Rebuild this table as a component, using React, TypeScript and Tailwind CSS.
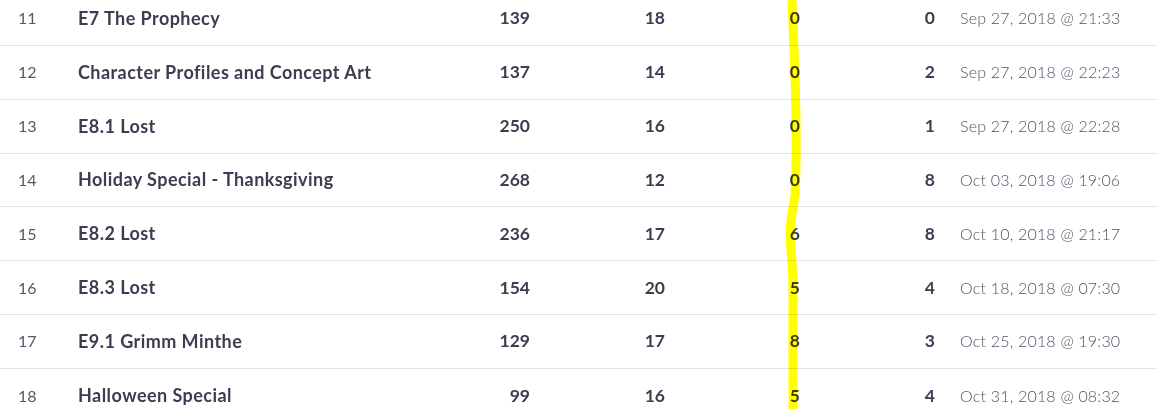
import React from "react";

type Row = {
  n: number;
  title: string;
  a: number;
  b: number;
  c: number;
  d: number;
  date: string;
};

const rows: Row[] = [
  { n: 11, title: "E7 The Prophecy", a: 139, b: 18, c: 0, d: 0, date: "Sep 27, 2018 @ 21:33" },
  { n: 12, title: "Character Profiles and Concept Art", a: 137, b: 14, c: 0, d: 2, date: "Sep 27, 2018 @ 22:23" },
  { n: 13, title: "E8.1 Lost", a: 250, b: 16, c: 0, d: 1, date: "Sep 27, 2018 @ 22:28" },
  { n: 14, title: "Holiday Special - Thanksgiving", a: 268, b: 12, c: 0, d: 8, date: "Oct 03, 2018 @ 19:06" },
  { n: 15, title: "E8.2 Lost", a: 236, b: 17, c: 6, d: 8, date: "Oct 10, 2018 @ 21:17" },
  { n: 16, title: "E8.3 Lost", a: 154, b: 20, c: 5, d: 4, date: "Oct 18, 2018 @ 07:30" },
  { n: 17, title: "E9.1 Grimm Minthe", a: 129, b: 17, c: 8, d: 3, date: "Oct 25, 2018 @ 19:30" },
  { n: 18, title: "Halloween Special", a: 99, b: 16, c: 5, d: 4, date: "Oct 31, 2018 @ 08:32" },
];

const App: React.FC = () => {
  return (
    <div className="relative h-[420px] w-[1157px] overflow-hidden bg-white">
      <div className="-mt-[8px] flex flex-col">
        {rows.map((r, i) => (
          <div
            key={r.n}
            className={`grid h-[53.85px] grid-cols-[60px_352px_100px_135px_135px_135px_1fr] items-center pl-[18px] ${
              i < rows.length - 1 ? "border-b border-[#e2e2e2]" : ""
            }`}
          >
            <span className="font-['Lato',sans-serif] text-[16px] font-normal text-[#5a5868]">{r.n}</span>
            <span className="font-['Lato',sans-serif] text-[18px] font-bold tracking-[0.45px] text-[#3e3c50]">
              {r.title}
            </span>
            <span className="text-right font-['Lato',sans-serif] text-[17.5px] font-bold text-[#3e3c50]">{r.a}</span>
            <span className="text-right font-['Lato',sans-serif] text-[17.5px] font-bold text-[#3e3c50]">{r.b}</span>
            <span className="text-right font-['Lato',sans-serif] text-[17.5px] font-bold text-[#3e3c50]">{r.c}</span>
            <span className="text-right font-['Lato',sans-serif] text-[17.5px] font-bold text-[#3e3c50]">{r.d}</span>
            <span className="pl-[25px] font-['Lato',sans-serif] text-[16px] font-light tracking-[0.2px] text-[#4e5368]">
              {r.date}
            </span>
          </div>
        ))}
      </div>

      {/* highlighter stroke over the 5th column */}
      <svg
        className="pointer-events-none absolute left-0 top-0 mix-blend-multiply"
        width="1157"
        height="420"
        viewBox="0 0 1157 420"
      >
        <path
          d="M792 0 C793 25 794 50 795 75 C796 110 797 160 795 195 C793 210 790 220 790 235 C791 255 793 265 793 290 L793 409"
          fill="none"
          stroke="#ffff00"
          strokeWidth="9"
          strokeLinecap="butt"
        />
      </svg>
    </div>
  );
};

export default App;
